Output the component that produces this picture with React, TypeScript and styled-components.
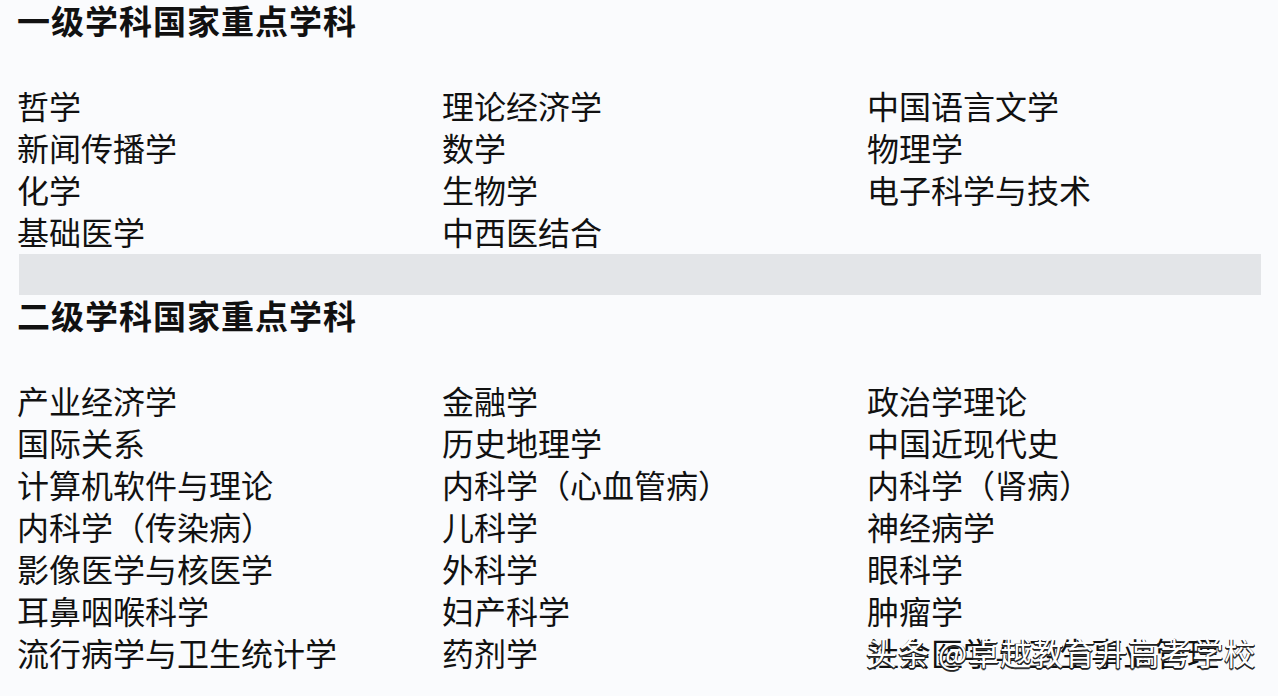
import * as React from "react";
import styled, { createGlobalStyle } from "styled-components";

const GlobalStyle = createGlobalStyle`
  html, body {
    margin: 0;
    padding: 0;
    background: #fafbfd;
  }
  body {
    font-family: "Noto Sans CJK SC", "Noto Sans", sans-serif;
    color: #111;
  }
`;

const Page = styled.div`
  width: 1278px;
  height: 696px;
  overflow: hidden;
  display: flex;
  flex-direction: column;
`;

const Heading = styled.h2`
  margin: 0;
  padding: 0 0 4px 17px;
  line-height: 40px;
  font-size: 33px;
  font-weight: 700;
  letter-spacing: 1px;
  white-space: nowrap;
`;

const Spacer = styled.div`
  height: 42px;
`;

const Grid = styled.div`
  display: grid;
  grid-template-columns: repeat(3, 425px);
  grid-auto-rows: 42px;
  padding-left: 17px;
`;

const Item = styled.div`
  position: relative;
  font-size: 32px;
  line-height: 38px;
  padding-bottom: 4px;
  white-space: nowrap;
`;

const Band = styled.div`
  margin: 0 17px 0 19px;
  height: 41px;
  background: #e3e5e8;
`;

const Watermark = styled.span`
  position: absolute;
  left: -1px;
  top: 0;
  font-size: 31px;
  line-height: 38px;
  color: #fff;
  letter-spacing: 1px;
  text-shadow: 1px 1px 0 #222, -1px 1px 0 #222, 0 2px 0 #444;
`;

const first = [
  "哲学", "理论经济学", "中国语言文学",
  "新闻传播学", "数学", "物理学",
  "化学", "生物学", "电子科学与技术",
  "基础医学", "中西医结合", "",
];

const second = [
  "产业经济学", "金融学", "政治学理论",
  "国际关系", "历史地理学", "中国近现代史",
  "计算机软件与理论", "内科学（心血管病）", "内科学（肾病）",
  "内科学（传染病）", "儿科学", "神经病学",
  "影像医学与核医学", "外科学", "眼科学",
  "耳鼻咽喉科学", "妇产科学", "肿瘤学",
  "流行病学与卫生统计学", "药剂学", "社会医学与卫生事业管理",
];

export default function App() {
  return (
    <Page>
      <GlobalStyle />
      <Heading>一级学科国家重点学科</Heading>
      <Spacer />
      <Grid>
        {first.map((t, i) => (
          <Item key={i}>{t}</Item>
        ))}
      </Grid>
      <Band />
      <Heading>二级学科国家重点学科</Heading>
      <Spacer />
      <Grid>
        {second.map((t, i) => (
          <Item key={i}>
            {t}
            {i === second.length - 1 && <Watermark>头条 @卓越教育升高考学校</Watermark>}
          </Item>
        ))}
      </Grid>
    </Page>
  );
}
